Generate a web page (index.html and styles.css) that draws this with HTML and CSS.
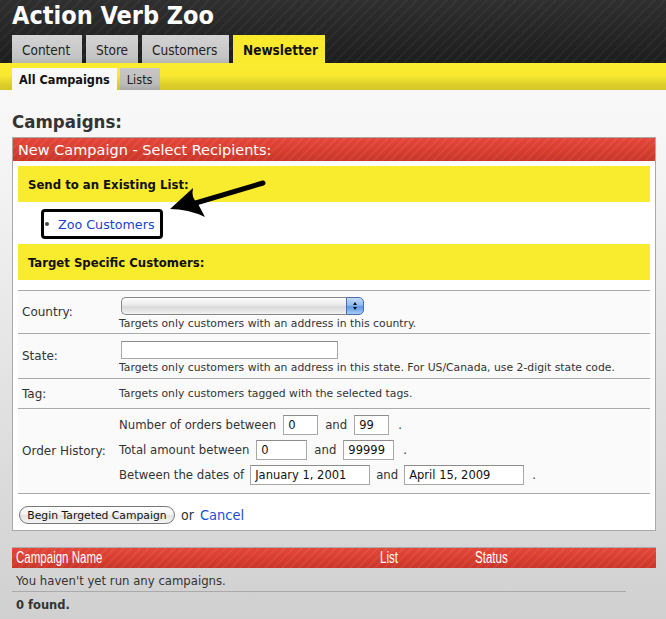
FILE: index.html
```html
<!DOCTYPE html>
<html lang="en">
<head>
<meta charset="utf-8">
<title>Action Verb Zoo – Campaigns</title>
<link rel="stylesheet" href="styles.css">
</head>
<body>
<header class="top">
  <h1 class="site-title">Action Verb Zoo</h1>
  <nav class="tabs">
    <a class="tab">Content</a>
    <a class="tab">Store</a>
    <a class="tab">Customers</a>
    <a class="tab tab-active">Newsletter</a>
  </nav>
</header>
<nav class="subbar">
  <a class="subtab subtab-active">All Campaigns</a>
  <a class="subtab">Lists</a>
</nav>
<main class="main">
  <h2 class="page-title">Campaigns:</h2>
  <section class="box">
    <div class="box-head">New Campaign - Select Recipients:</div>
    <div class="box-body">
      <div class="band">Send to an Existing List:</div>
      <ul class="lists">
        <li class="list-item"><a class="link">Zoo Customers</a></li>
      </ul>
      <div class="band">Target Specific Customers:</div>
      <div class="form">
        <div class="row row-country">
          <div class="label">Country:</div>
          <div class="field">
            <div class="select">
              <span class="select-face"></span>
              <span class="select-btn"><span class="tri-up"></span><span class="tri-down"></span></span>
            </div>
            <div class="help">Targets only customers with an address in this country.</div>
          </div>
        </div>
        <div class="row row-state">
          <div class="label">State:</div>
          <div class="field">
            <input class="input input-state" type="text">
            <div class="help">Targets only customers with an address in this state. For US/Canada, use 2-digit state code.</div>
          </div>
        </div>
        <div class="row row-tag">
          <div class="label">Tag:</div>
          <div class="field">
            <div class="help">Targets only customers tagged with the selected tags.</div>
          </div>
        </div>
        <div class="row row-history">
          <div class="label">Order History:</div>
          <div class="field history">
            <div class="line">Number of orders between <input class="input w-orders" type="text" value="0"> and <input class="input w-orders" type="text" value="99"> <span class="dot">.</span></div>
            <div class="line">Total amount between <input class="input w-amount" type="text" value="0"> and <input class="input w-amount" type="text" value="99999"> <span class="dot">.</span></div>
            <div class="line line-dates">Between the dates of <input class="input w-date" type="text" value="January 1, 2001"> and <input class="input w-date" type="text" value="April 15, 2009"> <span class="dot">.</span></div>
          </div>
        </div>
      </div>
      <div class="actions">
        <button class="btn" type="button">Begin Targeted Campaign</button>
        <span class="or">or</span>
        <a class="link cancel">Cancel</a>
      </div>
    </div>
    <svg class="arrow" width="280" height="90" viewBox="0 0 280 90">
      <line x1="250" y1="45" x2="176" y2="67" stroke="#000" stroke-width="5" stroke-linecap="round"/>
      <path d="M157 71 L180 50 Q178 60 184 64 L192 79 Q175 71 157 71 Z" fill="#000"/>
    </svg>
  </section>

  <section class="results">
    <div class="results-head">
      <span class="col-name">Campaign Name</span>
      <span class="col-list">List</span>
      <span class="col-status">Status</span>
    </div>
    <div class="results-empty">You haven't yet run any campaigns.</div>
    <div class="results-count">0 found.</div>
  </section>
</main>
</body>
</html>
```
FILE: styles.css
```css
html {
  min-height: 100%;
  background: linear-gradient(to bottom, #fafafa 0, #f7f7f7 130px, #d0d0d0 100%);
}
body {
  margin: 0;
  min-height: 100vh;
  font-family: "DejaVu Sans", sans-serif;
  color: #222;
}

/* Header */
.top {
  height: 63px;
  background:
    repeating-linear-gradient(135deg, rgba(255,255,255,0.035) 0 2px, rgba(0,0,0,0) 2px 7px),
    linear-gradient(to bottom, #2f2f2f, #1d1d1d);
  display: flex;
  flex-direction: column;
  padding-left: 12px;
}
.site-title {
  margin: 0;
  height: 35px;
  font-family: "DejaVu Sans Condensed", "DejaVu Sans", sans-serif;
  font-stretch: semi-condensed;
  font-size: 25px;
  line-height: 31px;
  font-weight: bold;
  color: #fff;
}
.tabs {
  display: flex;
  gap: 4px;
  height: 28px;
}
.tab {
  display: flex;
  align-items: center;
  padding: 1px 10px 0;
  font-family: "DejaVu Sans Condensed", "DejaVu Sans", sans-serif;
  font-stretch: semi-condensed;
  font-size: 13.5px;
  color: #222;
  background: linear-gradient(to bottom, #d4d4d4, #c4c4c4 80%, #b5b5b5);
}
.tab:nth-child(1) { width: 50px; }
.tab:nth-child(2) { width: 32px; }
.tab:nth-child(3) { width: 67px; }
.tab-active {
  width: 72px;
  font-weight: bold;
  color: #111;
  background: #f9ea2e;
}

.subbar {
  height: 27px;
  padding-left: 12px;
  display: flex;
  align-items: flex-end;
  gap: 3px;
  background: linear-gradient(to bottom, #fbec31 0, #f8e92f 45%, #d9cb2a 85%, #d3c528 100%);
}
.subtab {
  height: 22px;
  display: flex;
  align-items: center;
  padding: 0 7px;
  white-space: nowrap;
  font-family: "DejaVu Sans Condensed", "DejaVu Sans", sans-serif;
  font-stretch: semi-condensed;
  font-size: 12.6px;
  color: #222;
  background: linear-gradient(to bottom, #c8c8c8, #bcbcbc 70%, #a9a9a9);
}
.subtab-active {
  font-weight: bold;
  background: #f8f8f8;
  color: #111;
}

/* Main */
.main {
  padding: 0 10px 0 12px;
}
.page-title {
  margin: 0;
  padding-top: 19px;
  height: 28px;
  font-family: "DejaVu Sans Condensed", "DejaVu Sans", sans-serif;
  font-stretch: semi-condensed;
  font-size: 18.5px;
  line-height: 26px;
  font-weight: bold;
  color: #333;
}
.box {
  position: relative;
  border: 1px solid #a9a9a9;
  background: #fff;
}
.box-head {
  height: 23px;
  display: flex;
  align-items: center;
  padding-left: 5px;
  font-size: 14.5px;
  color: #fff;
  background:
    repeating-linear-gradient(135deg, rgba(255,255,255,0.06) 0 2px, rgba(0,0,0,0) 2px 6px),
    linear-gradient(to bottom, #e4473a, #d63c2d 60%, #c8362b);
}
.box-body {
  padding: 5px 5px 6px;
}
.band {
  height: 36px;
  display: flex;
  align-items: center;
  padding-left: 10px;
  background: #f9ec2e;
  font-family: "DejaVu Sans Condensed", "DejaVu Sans", sans-serif;
  font-stretch: semi-condensed;
  font-size: 13px;
  font-weight: bold;
  color: #111;
}
.lists {
  list-style: none;
  margin: 7px 0 5px 23px;
  padding: 0;
}
.list-item {
  box-sizing: border-box;
  display: inline-flex;
  align-items: center;
  height: 30px;
  width: 122px;
  border: 3px solid #000;
  border-radius: 4px;
  padding: 0 0 0 14px;
  position: relative;
}
.list-item::before {
  content: "";
  position: absolute;
  left: 1px;
  top: 10px;
  width: 4px;
  height: 4px;
  border-radius: 50%;
  background: #444;
}
.link {
  color: #2040cc;
  font-size: 12.7px;
  text-decoration: none;
}

/* Form */
.form {
  margin-top: 10px;
  border-top: 1px solid #aaa;
}
.row {
  display: grid;
  grid-template-columns: 101px 1fr;
  align-items: center;
  border-bottom: 1px solid #aaa;
  background: #fafafa;
}
.label {
  padding-left: 4px;
  font-size: 12px;
  color: #333;
}
.field {
  font-size: 10.8px;
  color: #333;
}
.row-country .field { padding: 6px 0 2px; }
.row-state .field { padding: 7px 0 3px; }
.row-tag .field { padding: 8px 0 7px; }
.help {
  line-height: 14px;
  white-space: nowrap;
}
.select {
  display: flex;
  width: 243px;
  height: 18px;
  margin: 0 0 2px 2px;
}
.select-face {
  flex: 1;
  border: 1px solid #888;
  border-right: none;
  border-radius: 5px 0 0 5px;
  background: linear-gradient(to bottom, #fdfdfd, #eaeaea 45%, #d8d8d8 55%, #f2f2f2);
}
.select-btn {
  width: 16px;
  border: 1px solid #4a6fa8;
  border-radius: 0 5px 5px 0;
  background: linear-gradient(to bottom, #c4dbf6, #8fbaf0 45%, #5c98e6 55%, #a7ccf6);
  display: flex;
  flex-direction: column;
  align-items: center;
  justify-content: center;
  gap: 2px;
}
.tri-up, .tri-down {
  width: 0;
  height: 0;
  border-left: 2.5px solid transparent;
  border-right: 2.5px solid transparent;
}
.tri-up { border-bottom: 3px solid #111; }
.tri-down { border-top: 3px solid #111; }

.input {
  box-sizing: border-box;
  height: 20px;
  border: 1px solid #a8a8a8;
  border-top-color: #8c8c8c;
  padding: 0 4px;
  font-family: inherit;
  font-size: 11.5px;
  color: #111;
  background: #fff;
  margin: 0;
}
.input-state {
  width: 217px;
  height: 18px;
  margin: 0 0 2px 2px;
  display: block;
}
.history {
  padding: 6px 0 8px;
  font-size: 11.7px;
}
.history .line {
  height: 20px;
  margin-bottom: 5px;
  display: flex;
  align-items: center;
  gap: 7px;
  white-space: nowrap;
}
.history .line-dates { gap: 6px; }
.history .line:last-child { margin-bottom: 0; }
.w-orders { width: 35px; }
.w-amount { width: 51px; }
.w-date { width: 120px; }
.dot { margin-left: 2px; }

.actions {
  display: flex;
  align-items: center;
  gap: 6px;
  padding-top: 12px;
  padding-left: 1px;
}
.btn {
  height: 18px;
  width: 156px;
  padding: 0;
  border: 1px solid #777;
  border-radius: 9px;
  background: linear-gradient(to bottom, #ffffff, #f1f1f1 50%, #e2e2e2 51%, #f4f4f4);
  font-family: inherit;
  font-size: 10.8px;
  color: #111;
}
.or {
  font-family: "DejaVu Sans Condensed", "DejaVu Sans", sans-serif;
  font-stretch: semi-condensed;
  font-size: 14px;
  color: #333;
}
.cancel {
  font-family: "DejaVu Sans Condensed", "DejaVu Sans", sans-serif;
  font-stretch: semi-condensed;
  font-size: 14.5px;
  color: #1a4fd4;
}

.arrow {
  position: absolute;
  left: 0;
  top: 0;
  pointer-events: none;
}

/* Results */
.results {
  margin-top: 16px;
  border-top: 1px solid #aaa;
}
.results-head {
  height: 20px;
  display: grid;
  grid-template-columns: 364px 95px 1fr;
  align-items: center;
  padding-left: 4px;
  font-family: "Liberation Sans", sans-serif;
  font-size: 16px;
  color: #fff;
  background:
    repeating-linear-gradient(135deg, rgba(255,255,255,0.06) 0 2px, rgba(0,0,0,0) 2px 6px),
    linear-gradient(to bottom, #e4473a, #d63c2d 60%, #c8362b);
}
.results-head span {
  justify-self: start;
  transform: scaleX(0.72);
  transform-origin: left center;
}
.results-empty {
  box-sizing: border-box;
  height: 24px;
  padding-top: 2px;
  display: flex;
  align-items: center;
  padding-left: 4px;
  margin-right: 30px;
  border-bottom: 1px solid #aaa;
  font-size: 11.7px;
  color: #333;
}
.results-count {
  height: 25px;
  display: flex;
  align-items: center;
  padding-left: 4px;
  font-size: 11.5px;
  font-weight: bold;
  color: #333;
}
```
